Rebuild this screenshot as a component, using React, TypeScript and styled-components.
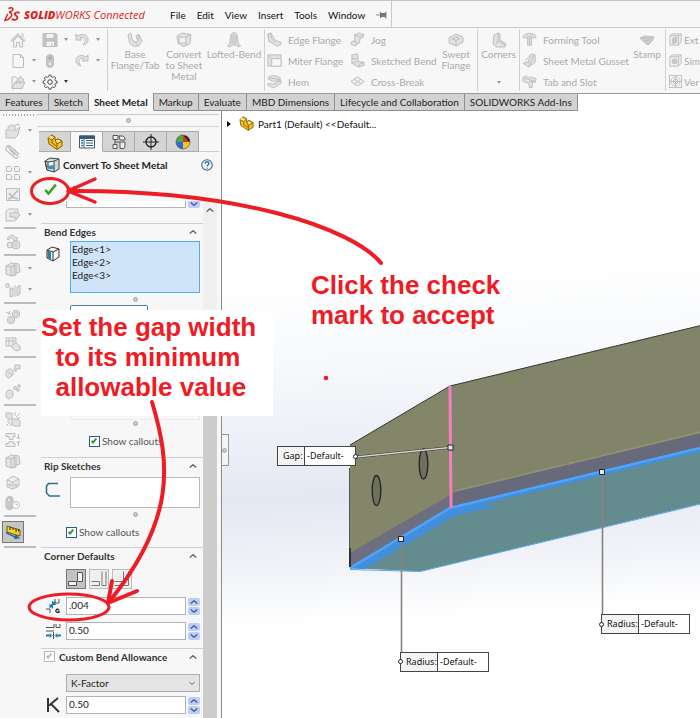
import React from "react";
import styled, { createGlobalStyle, css } from "styled-components";

const RED = "#ee1c24";

const GlobalStyle = createGlobalStyle`
  *, *::before, *::after { box-sizing: border-box; }
  body {
    margin: 0;
    background: #f7f7f7;
    font-family: Lato, "Noto Sans", sans-serif;
    font-size: 10px;
    line-height: 12px;
    color: #222;
  }
  button, input, select { font: inherit; color: inherit; margin: 0; }
  ul { list-style: none; margin: 0; padding: 0; }
`;

/* ---------- icons ---------- */

const g = { fill: "#e2e2e2", stroke: "#bdbdbd", strokeWidth: 1, strokeLinejoin: "round" as const };
const line = { fill: "none", stroke: "#bdbdbd", strokeWidth: 1 };

const glyphs: Record<string, React.ReactNode> = {
  home: <g {...g}><path d="M1 8.5 8 1.5l7 7-1 1-6-6-6 6z" /><path d="M3.5 8.5V15h3v-4.500h3V15h3V8.500L8 4z" fill="#f4f4f4" /><path d="M11.500 2h1.500v3" fill="none" /></g>,
  save: <g {...g}><path d="M1 1.500h13l1 1V14.500H1z" fill="#c4c4c4" /><path d="M4 1.500h8v5H4zM4 9h8.500v5.500H4z" fill="#f3f3f3" /><path d="M10 11v3.500" /></g>,
  undo: <g {...g}><path d="M2 2v6h6L6 6c3-1.500 6 0 5 3.500-.3 1.500-1 2.500-2 3.500 3-.5 5.500-3 5-6C13.500 3 8.500 1 4 4z" /></g>,
  redo: <g {...g}><path d="M14 2v6H8l2-2C7 4.500 4 6 5 9.500c.3 1.500 1 2.500 2 3.500-3-.5-5.500-3-5-6C2.500 3 7.500 1 12 4z" /></g>,
  page: <path {...g} fill="#f8f8f8" d="M3 1.500h7.500L13.500 4.500v10H3zM10.500 1.500v3h3" />,
  traffic: <g {...g}><rect x="4.500" y="1.500" width="7" height="13" rx="3.500" fill="#c9c9c9" /><circle cx="8" cy="5" r="2" fill="#aaa" /><circle cx="8" cy="11" r="2" fill="#eee" /></g>,
  open: <g {...g}><path d="M2 3h4l1 1.500h4v10H2z" fill="#f5f5f5" /><path d="M2 14.500 5 8h10l-3 6.500z" /><path d="M6 10c0-4 2-5.500 4-5.500V2l4 4-4 4V7c-2 0-3 1-4 3z" /></g>,
  gear: <g fill="none" stroke="#444"><circle cx="8" cy="8" r="2.300" /><path d="M7 1.500h2l.5 1.800 1.300.6 1.700-.9 1.500 1.500-.9 1.700.5 1.300 1.900.5v2l-1.900.5-.5 1.200.9 1.700-1.500 1.500-1.700-.9-1.300.6-.5 1.900H7l-.5-1.900-1.300-.6-1.700.9L2 13.400l.9-1.700-.5-1.200-1.900-.5V8l1.900-.5.5-1.300L2 4.500 3.500 3l1.700.9 1.300-.6z" transform="translate(.5 -.3) scale(.94)" /></g>,
  base: <g {...g}><path d="M1 3l3-1.500 1 6c1 3 4 4 5.500 1L9 4l3-1.500 3 7-3.500 4.500c-5 1.500-8-1-9-4z" /><path d="M5 7.500 9 11l2.500 3M12 2.500l-.5 6" fill="none" /></g>,
  convert: <g {...g}><path d="M1 4l5-3 9 1.500-1 9-6 3-6-3z" /><path d="M3 5h7v6H3zM10 5l5-2.500M10 11v3" fill="#f2f2f2" /></g>,
  loft: <g {...g}><path d="M5 3c0-3 6-3 6 0l1.500 9 2 2-2.500 1-2-2H6l-2 2-2.500-1 2-2z" /><path d="M6 3v9M8 2v10M10 3v9" fill="none" /></g>,
  edge: <g {...g}><path d="M1 2l3-1 5 8 6 2v2l-4 2-9-5z" /><path d="M1 2l1 8M4 1l1 6 4 4" fill="none" /></g>,
  miter: <g {...g}><path d="M1 2h14v12H1z" /><path d="M5 6h10v8H5z" fill="#f7f7f7" /><path d="M1 2l4 4" /></g>,
  hem: <g {...g}><path d="M1 4c3-3 8-3 13 0v3L6 8 1 5zM1 10l5 1 9-4v3l-8 5-6-3z" /><path d="M2 4l12 2" fill="none" /></g>,
  jog: <g {...g}><path d="M5 3l5-2 5 2-1 3-3 .5-1 5-5 3.500-4-2 1-3 3-.5z" /><path d="M5 3l5 2 4-1.500M4 9l3 2v3" fill="none" /></g>,
  sketched: <g {...g}><path d="M2 2l6-1 1 8 6 1v3l-6 2-7-4z" /><path d="M2 11l6-2M9 15l1-3 5-2M2 6h6" fill="none" /></g>,
  cross: <g {...g} fill="#eee"><path d="M1 8l7-5 7 5-7 5zM4.500 5.500l7 5M11.500 5.500l-7 5" /></g>,
  swept: <g {...g}><path d="M1 6l7-4 7 3v5l-7 4-7-3zM4 7l4-2 4 1.500-4 2zM8 9v5" /></g>,
  corners: <g {...g}><path d="M3 3l4-2 2 1v6l6 4-1 3H5l-3-3z" /><path d="M7 1v8l-2 3M7 9l7 4" fill="none" /></g>,
  forming: <g {...g}><path d="M1 6c0-6 14-6 14 0-2 1-3 0-5 0v8H6V6C4 6 3 7 1 6z" /><path d="M5 3l3 3 3-3M8 6v8" fill="none" /></g>,
  gusset: <g {...g}><path d="M1 11l5-1 4-9 4 1v8l-7 5z" /><path d="M6 10l3 1 4-9M9 11l-2 4M3 9l6-7" fill="none" /></g>,
  slot: <g {...g}><path d="M1 4l3-2 3 2 2-1 6 2-1 4-3-1v6l-3 1-1-5-6-2z" /><path d="M1 4l13 4M8 9l3-1" fill="none" /></g>,
  stamp: <g {...g} fill="#cfcfcf"><path d="M1 6l5-2 9 1-2 4-4 4-4-3z" /><path d="M4 6l5 1 4-1M6 9l5-1" fill="none" /></g>,
  cut: <g {...g} fill="#eee"><path d="M2 4l3-2h9v9l-3 3H2zM2 4h9v10M11 4l3-2" /><path d="M5 7l2-1h2v5l-2 1H5z" fill="#ccc" /></g>,
  hole: <g {...g} fill="#eee"><path d="M2 4l3-2h9v9l-3 3H2zM2 4h9v10M11 4l3-2" /><circle cx="7" cy="9" r="2.500" fill="#ccc" /></g>,
  vent: <g {...line}><rect x="1.500" y="1.500" width="13" height="13" /><circle cx="8" cy="8" r="5" /><circle cx="8" cy="8" r="2.500" /><path d="M8 2v12M2 8h12" /></g>,
  folderBox: <g {...g}><path d="M1 7h10l4-3-2 8-3 3H1z" /><path d="M3 7V4l3-2 4 1v4M10 2l3-1 2 2" /></g>,
  clip: <path {...line} strokeWidth="1.300" d="M3 3l9 8c2 2 0 4-2 3L2 7C-1 4 3 0 6 3l8 7M5 6l5 5" />,
  grid: <g {...g} fill="#f2f2f2"><path d="M1.500 1.500h4l1 1v4h-5zM9.500 1.500h4l1 1v4h-5zM1.500 9.500h4l1 1v4h-5zM9.500 9.500h4l1 1v4h-5z" /></g>,
  arrowBox: <g {...g}><path d="M1.500 2.500h13v12h-13z" fill="#eee" /><path d="M4 7l3 4 6-7M3 13l5-2 5 2" fill="none" strokeWidth="1.600" /></g>,
  export: <g {...g}><path d="M1 4l3-2h9v9l-3 3H1z" fill="#eee" /><path d="M5 6h5V4l5 4-5 4v-2H5z" /></g>,
  gears: <g {...g}><path d="M2 5c2-5 8-4 9-1l1-1v4H8l1-1C7 3 4 4 4 6z" /><circle cx="5" cy="11" r="3" /><circle cx="11" cy="11" r="4" /><circle cx="11" cy="11" r="1.300" fill="#fff" /></g>,
  cubes: <g {...g}><path d="M1 5l5-3 8 1 1 8-4 1v2l-5 1-5-2zM1 5l5 1v8M6 6l5-2v9M9 2v12" /></g>,
  mirror: <g {...g}><circle cx="2.500" cy="3.500" r="2" /><path d="M5 6h3v8l-3 1zM10 3v12M12 5l3-2v9l-3 2z" /></g>,
  ring: <g {...g}><circle cx="11" cy="5" r="3.700" /><circle cx="11" cy="5" r="1.500" fill="#fff" /><circle cx="6" cy="11" r="3.700" /><circle cx="6" cy="11" r="1.500" fill="#fff" /><path d="M1 3l5 2M3 6l2-4" /></g>,
  table: <g {...g}><path d="M1 2h10v8H1zM1 5h10M4 2v8M8 2v8" fill="#f1f1f1" /><path d="M7 9l4-2 4 3v4l-4 1-4-3z" /></g>,
  blob: <g {...g}><path d="M1 9c2-5 6-3 7-1v4l-4 3c-4-1-3-4-3-6zM10 2h5v4h-4v3l-2-2z" /><path d="M3 9l4 3" fill="none" /></g>,
  blob2: <g {...g}><path d="M1 9c2-5 6-3 7-1v4l-4 3c-4-1-3-4-3-6z" /><circle cx="10" cy="4" r="1.500" /><circle cx="14" cy="2" r="1.300" /><circle cx="13" cy="6" r="1.300" /></g>,
  burst: <g {...g}><path d="M1 2h6v6H3L1 6zM7 8h6l2 2v5H9l-2-2z" /><path d="M10 5V1M11 6l4-4M12 7h3M5 11l-4 4M5 10H2M6 12v3" /></g>,
  press: <g {...g} fill="#eee"><path d="M1 1.500h9v3H8v3H4v-3H1zM1 14.500h9v-3H8v-2H4v2H1zM13.500 2v5M12 5l1.500 2L15 5M13.500 14V9M12 11l1.500-2 1.500 2" /></g>,
  house: <g {...g} fill="#ececec"><path d="M2 6l6-4 6 3v7l-6 3-6-2zM2 6l6 2 6-3M8 8v7M4 10h2v2H4zM10 10h2v2h-2z" /></g>,
  clock: <g {...g}><path d="M1 4c2-4 7-3 7 0v9c-2 3-6 2-7-1z" fill="#c9c9c9" /><circle cx="4" cy="5" r="1.500" fill="#fff" /><circle cx="11" cy="10" r="3.500" fill="#fff" /><path d="M11 8v2h2" /></g>,
  measure: <g><path d="M2 2l13 4v6L2 8z" fill="#ffcf2a" stroke="#6b5a10" /><path d="M5 3v3M8 4v2M11 5v3M13.500 5.500v2" stroke="#222" /><path d="M1 8l9 4 .5-2 4.500 4.500-6 .5.500-1.500-8.500-4z" fill="#1d6a9c" /></g>,
  part: <g stroke="#8a6508" strokeLinejoin="round"><path d="M1 4l3-3 4 2v3l3-1 4 2v5l-5 3.500L2 10z" fill="#f5bd1f" /><path d="M4 1l4 2-3 3-4-2M8 6l3-1 4 2-5 3z" fill="#ffe071" /><path d="M5 6v3l5 3.500M10 10v5" fill="none" /></g>,
  properties: <g stroke="#3c5a72" fill="#fff"><path d="M.5 2h15v12H.500z" /><path d="M.5 2h15v2.500H.500z" fill="#2c5a80" /><path d="M5 4.500V14" /><path d="M2 6.500h2M2 9h2M2 11.500h2" stroke="#2080c0" strokeWidth="1.500" /><path d="M7 6.500h7M7 9h7M7 11.500h7" /></g>,
  config: <g stroke="#555" fill="#eee"><path d="M2 1.500h5v4H2zM2 10.500h4v4H2zM4 5.500v5M4 8h5" /><path d="M8 2h4l2 2v2H9zM9 8h5v4l-1 2.500H9z" /></g>,
  target: <g stroke="#222" fill="none" strokeWidth="1.400"><circle cx="8" cy="8" r="5" /><path d="M8 0v16M0 8h16" strokeWidth="1" /></g>,
  ball: <g><path d="M8 8l-7 0a7 7 0 0 0 7 7z" fill="#2f67e0" /><path d="M8 8v7a7 7 0 0 0 7-7z" fill="#f4c520" /><path d="M8 8h7a7 7 0 0 0-7-7z" fill="#dd3422" /><path d="M1 8a7 7 0 0 1 7-7v7z" fill="#48ad3c" /><path d="M9 2l5 6 1-2-3-4z" fill="#222" /><circle cx="8" cy="8" r="7" fill="none" stroke="#555" strokeWidth=".7" /></g>,
  sheet: <g stroke="#39444d" strokeLinejoin="round"><path d="M1 4l5-3 9 1v10l-5 3-7-2z" fill="#cfd5d8" /><path d="M1 4l3 1 6-1 5-2M4 5v6l6-1V4" fill="#eef2f4" /><path d="M10 10v5M1 4l2 9" fill="none" /><path d="M3 9l7-1v4H5z" fill="#3f8eb8" stroke="none" /></g>,
  help: <g fill="none" stroke="#45677f"><circle cx="8" cy="8" r="7" strokeWidth="1.500" /><path d="M5.500 6.200c0-3.300 5-3.300 5 0C10.500 8 8 8 8 10M8 11.500v1.500" stroke="#1f72a8" strokeWidth="1.800" /></g>,
  check: <path d="M1.500 8.500l4 4.500 9-11" fill="none" stroke="#38a01e" strokeWidth="3" />,
  cancel: <path d="M3 3l10 10M13 3L3 13" fill="none" stroke="#e2571c" strokeWidth="3" />,
  body: <g stroke="#333" strokeLinejoin="round"><path d="M2 4l5-3 7 2v8l-6 4-6-3z" fill="#f4f4f4" /><path d="M2 4l6 2 6-3M8 6v9" fill="none" /><path d="M2.500 4.500L6 6v7.500L2.500 12z" fill="#2e7fa8" stroke="none" /></g>,
  rip: <path d="M13 1.500H3.500L1.500 4v7l3 3H15" fill="none" stroke="#2f6f94" strokeWidth="1.600" />,
  gapSize: <g fill="none"><path d="M1 11h4v4M10 1v4h4V1" stroke="#555" /><path d="M10.500 3.500 4.500 9.500" stroke="#1d7ab0" strokeWidth="1.600" /><path d="M7 2.500v4.500h4.500zM3.500 6.500H8V11z" fill="#1d7ab0" /><path d="M14 11.500c-3-2-4.500 3-1.500 3h1.500V13h-1.500" stroke="#222" strokeWidth="1.200" /></g>,
  ratio: <g fill="none" stroke="#555"><path d="M1 4.500h8V1M1 8h8M11 1v3.500h4V1" /><path d="M8.500 9v7" /><path d="M1 12.500h5M16 12.500h-5" stroke="#1d7ab0" strokeWidth="2" /><path d="M5 10.500l2 2-2 2M12 10.500l-2 2 2 2" stroke="#1d7ab0" /></g>,
  factor: <path d="M3 1v14M13 1L4 8.500M6 7l8 8" fill="none" stroke="#333" strokeWidth="2" />,
  cornerOpen: <g fill="#f4f4f4" stroke="#555"><path d="M9.500 1.500h5v9h-5zM.5 10.500h8v4h-8z" /></g>,
  cornerOverlap: <g fill="none" stroke="#777"><path d="M.5 10.500h8M.5 14.500h8v-4M11 .5v14h4V.500" /></g>,
  cornerUnder: <g fill="none" stroke="#777"><path d="M.5 10.500h9V.500M.5 14.500h14V.500" /></g>,
  pin: <g fill="#777" stroke="#777"><path d="M0 8h6" /><path d="M6 4v8M7 6h5v4H7zM13 3.500v9" strokeWidth="1.600" /></g>,
  ds: <g fill="none" stroke="#d9271c" strokeWidth="1.500" strokeLinecap="round"><path d="M5 1.200c3-1 5 .3 3.300 2.300C7.400 4.600 6 5 5 5.300c3 .3 3.500 2.700 1.500 5C5 12.300 3 13.300.8 13.500L3.400 7.500" /><path d="M15 5.500c-3-.7-4.800.6-3.800 2.300.8 1.300 3 1.800 2 3.600-.8 1.500-3 1.600-4.700.9" strokeWidth="1.800" /></g>,
};

const Svg = styled.svg<{ $s: number }>`
  display: block;
  flex: none;
  width: ${(p) => p.$s}px;
  height: ${(p) => p.$s}px;
`;
const Glyph = ({ name, size = 16 }: { name: string; size?: number }) => (
  <Svg $s={size} viewBox="0 0 16 16" aria-hidden="true">{glyphs[name]}</Svg>
);

const Caret = styled.span<{ $dark?: boolean }>`
  width: 0;
  height: 0;
  border: 2px solid transparent;
  border-top: 3px solid ${(p) => (p.$dark ? "#333" : "#999")};
  border-bottom: 0;
`;

/* ---------- shell ---------- */

const Shell = styled.div`
  position: relative;
  display: flex;
  flex-direction: column;
  min-height: 100vh;
  overflow: hidden;
`;

const TitleBar = styled.header`
  display: flex;
  height: 28px;
  border-top: 1px solid #c3c3c3;
  border-bottom: 1px solid #c9c9c9;
`;
const TitleMain = styled.div`
  display: flex;
  align-items: center;
  width: 392px;
  padding: 2px 4px 0;
  border-right: 1px solid #c9c9c9;
`;
const Brand = styled.div`
  display: flex;
  align-items: center;
  flex: none;
  width: 159px;
  gap: 4px;
  color: #d9271c;
  font: italic 11px/14px "Open Sans", sans-serif;
  white-space: pre;
  b { font-weight: 800; }
`;
const Menu = styled.nav`
  display: flex;
  align-items: center;
  gap: 11px;
  margin-left: 7px;
`;
const plainButton = css`
  background: none;
  border: 0;
  padding: 0;
`;
const MenuButton = styled.button`
  ${plainButton}
  color: #111;
`;

const Ribbon = styled.div`
  display: flex;
  height: 65px;
  padding-top: 1px;
  overflow: hidden;
  color: #aaa;
`;
const Group = styled.div<{ $w: number }>`
  display: flex;
  flex: none;
  width: ${(p) => p.$w}px;
  height: 62px;
  border-right: 1px solid #cfcfcf;
`;
const Quick = styled.div`
  display: grid;
  grid-template-columns: 32px 32px 32px;
  grid-template-rows: repeat(3, 21px);
  padding-left: 10px;
`;
const QuickButton = styled.button`
  ${plainButton}
  display: flex;
  align-items: center;
  gap: 6px;
`;
const Big = styled.button<{ $w: number }>`
  ${plainButton}
  display: flex;
  flex-direction: column;
  align-items: center;
  flex: none;
  width: ${(p) => p.$w}px;
  padding-top: 3px;
  line-height: 11px;
  white-space: pre;
  text-align: center;
  svg { margin-bottom: 1px; }
`;
const BigCaret = styled(Caret)`
  margin-top: 21px;
`;
const Stack = styled.div<{ $w: number }>`
  display: grid;
  grid-template-rows: repeat(3, 21px);
  flex: none;
  width: ${(p) => p.$w}px;
  padding-left: 2px;
`;
const Small = styled.button`
  ${plainButton}
  display: flex;
  align-items: center;
  gap: 6px;
  white-space: nowrap;
`;
const Features = styled(Stack)`
  ${Small} { gap: 1px; }
`;

const TabBar = styled.div`
  display: flex;
  height: 18px;
  background: #fff;
  border-top: 1px solid #999;
`;
const Tab = styled.button<{ $on?: boolean }>`
  flex: none;
  padding: 0 5px;
  line-height: 16px;
  white-space: nowrap;
  color: #222;
  background: #d2d2d2;
  border: 0;
  border-right: 1px solid #8f8f8f;
  border-bottom: 1px solid #8f8f8f;
  ${(p) => p.$on && css`
    font-weight: 700;
    background: #f7f7f7;
    border-bottom-color: #f7f7f7;
    margin-top: -1px;
  `}
`;

const Main = styled.main`
  display: flex;
  flex: 1;
`;

/* ---------- left toolbar ---------- */

const Rail = styled.aside`
  flex: none;
  width: 37px;
  padding-top: 9px;
  background:
    repeating-linear-gradient(90deg, #aaa 0 1px, transparent 1px 3px) 3px 3px / 33px 2px no-repeat,
    #f7f7f7;
`;
const RailRow = styled.div<{ $on?: boolean }>`
  display: flex;
  align-items: center;
  justify-content: space-between;
  height: ${(p) => (p.$on ? 25 : 21)}px;
  padding: 0 5px;
  padding-left: ${(p) => (p.$on ? 2 : 5)}px;
`;
const RailButton = styled.button<{ $on?: boolean }>`
  ${plainButton}
  ${(p) => p.$on && css`
    padding: 2px;
    background: #c6c6c6;
    border: 1px solid #777;
  `}
`;
const RailRule = styled.hr`
  height: 2px;
  margin: 2px 1px 2px 4px;
  border: 0;
  background: #bbb;
`;

/* ---------- property panel ---------- */

const Panel = styled.section`
  display: flex;
  flex-direction: column;
  flex: none;
  width: 185px;
  background: #f7f7f7;
  border-right: 1px solid #8b8b8b;
`;
const PanelGrip = styled.div`
  display: flex;
  align-items: center;
  justify-content: center;
  height: 13px;
  margin: 3px 2px 0 0;
  border-top: 1px solid #cacaca;
  border-bottom: 1px solid #d5d5d5;
`;
const Dot = styled.span`
  width: 5px;
  height: 5px;
  border-radius: 50%;
  background: #ccc;
  border: 1px solid #a5a5a5;
`;
const DotRow = styled.div<{ $h: number }>`
  display: flex;
  align-items: center;
  justify-content: center;
  height: ${(p) => p.$h}px;
  margin-left: 29px;
`;
const PanelTabs = styled.div`
  display: flex;
  height: 21px;
  margin: 4px 2px 0 2px;
`;
const PanelTab = styled.button<{ $on?: boolean }>`
  display: flex;
  align-items: center;
  justify-content: center;
  flex: none;
  width: 32px;
  padding: 0;
  background: ${(p) => (p.$on ? "#f7f7f7" : "#d4d4d4")};
  border: 1px solid #aaa;
  border-left: 0;
  border-bottom-color: ${(p) => (p.$on ? "#f7f7f7" : "#aaa")};
`;
const TabFill = styled.div`
  flex: 1;
  border-bottom: 1px solid #ccc;
`;
const PanelTitle = styled.h1`
  display: flex;
  align-items: center;
  gap: 3px;
  height: 26px;
  margin: 0;
  padding: 0 8px 0 7px;
  font-size: 10px;
  font-weight: 700;
  span { flex: 1; white-space: nowrap; }
`;
const Actions = styled.div`
  display: flex;
  align-items: center;
  gap: 8px;
  height: 23px;
  padding-left: 7px;
`;
const IconButton = styled.button`
  ${plainButton}
`;
const Scroller = styled.div`
  display: flex;
  flex: 1;
  padding-right: 4px;
`;
const Fields = styled.div`
  flex: 1;
  min-width: 0;
  padding-left: 4px;
`;
const ScrollTrack = styled.div`
  display: flex;
  flex-direction: column;
  align-items: center;
  width: 14px;
  background: #f0f0f0;
`;
const ScrollThumb = styled.div`
  flex: 1;
  width: 14px;
  margin-top: 180px;
  background: #cdcdcd;
`;
const Clipped = styled.div`
  display: flex;
  align-items: flex-end;
  height: 7px;
  margin-bottom: 15px;
  padding-right: 3px;
  overflow: hidden;
`;
const Section = styled.section<{ $b: number }>`
  padding: 0 3px ${(p) => p.$b}px 0;
  border-top: 1px solid #cfcfcf;
`;
const SectionHead = styled.h2<{ $gap: number }>`
  display: flex;
  align-items: center;
  gap: 4px;
  height: 15px;
  margin: 0 0 ${(p) => p.$gap}px;
  padding: 0 3px;
  font-size: 10px;
  font-weight: 700;
  color: #333;
  span, label { flex: 1; white-space: nowrap; }
`;
const Field = styled.div<{ $gap?: number }>`
  display: flex;
  align-items: center;
  margin-top: ${(p) => p.$gap ?? 0}px;
`;
const FieldIcon = styled.span<{ $wide?: boolean; $top?: boolean }>`
  display: flex;
  flex: none;
  width: ${(p) => (p.$wide ? 29 : 25)}px;
  padding-left: 4px;
  ${(p) => p.$top && "align-self: flex-start; padding-top: 5px;"}
`;
const ListBox = styled.ul<{ $h: number; $on?: boolean }>`
  flex: 1;
  height: ${(p) => p.$h}px;
  padding: 1px 1px;
  line-height: 13px;
  color: #222;
  background: ${(p) => (p.$on ? "#cfe4f8" : "#fff")};
  border: 1px solid ${(p) => (p.$on ? "#54aee6" : "#b5b9c0")};
`;
const EmptyList = styled(ListBox)`
  background: none;
  border-color: #ececec;
`;
const Outline = styled.button`
  display: block;
  width: 78px;
  height: 16px;
  margin-left: 29px;
  margin-bottom: 39px;
  background: #fff;
  border: 1px solid #4a7fa5;
  border-radius: 2px;
`;
const CheckRow = styled.label<{ $top: number; $left: number }>`
  display: flex;
  align-items: center;
  gap: 2px;
  height: 12px;
  margin: ${(p) => p.$top}px 0 0 ${(p) => p.$left}px;
  color: #555;
`;
const Tick = styled.input<{ $muted?: boolean }>`
  appearance: none;
  flex: none;
  width: 11px;
  height: 11px;
  border: 1px solid ${(p) => (p.$muted ? "#bbb" : "#2c5c8c")};
  background: #fff;
  &:checked::before {
    content: "";
    display: block;
    width: 6px;
    height: 3px;
    margin: 2px 0 0 1px;
    border: solid ${(p) => (p.$muted ? "#b9b9b9" : "#2f9b2f")};
    border-width: 0 0 2px 2px;
    transform: rotate(-48deg);
  }
`;
const Corners = styled.div`
  display: flex;
  gap: 3px;
  margin-left: 25px;
`;
const CornerButton = styled.button<{ $on?: boolean }>`
  display: grid;
  place-items: center;
  width: 20px;
  height: 20px;
  padding: 0;
  background: ${(p) => (p.$on ? "#c2c2c2" : "#f0f0f0")};
  border: 1px solid ${(p) => (p.$on ? "#777" : "#bbb")};
`;
const TextBox = styled.input`
  flex: 1;
  min-width: 0;
  height: 18px;
  padding: 0 2px 2px;
  background: #fff;
  border: 1px solid #b3b3b3;
  border-radius: 0;
`;
const Spin = styled.span`
  display: flex;
  flex-direction: column;
  gap: 1px;
  width: 12px;
  margin-left: 2px;
`;
const SpinButton = styled.button`
  display: grid;
  place-items: center;
  width: 12px;
  height: 8px;
  padding: 0;
  background: #bccdfb;
  border: 0;
  border-radius: 2px;
`;
const Combo = styled.span`
  display: grid;
  flex: 1;
  align-items: center;
  margin-left: 25px;
  > * { grid-area: 1 / 1; }
  > svg { justify-self: end; margin-right: 5px; pointer-events: none; }
`;
const Select = styled.select`
  appearance: none;
  height: 18px;
  padding: 0 4px;
  background: #e4e4e4;
  border: 1px solid #adadad;
  border-radius: 0;
`;

const Chevron = ({ up, w = 8, color = "#666" }: { up?: boolean; w?: number; color?: string }) => (
  <svg width={w} height={w / 2} viewBox="0 0 8 4" aria-hidden="true">
    <path d={up ? "M.7 3.600 4 .7l3.300 2.900" : "M.7.4 4 3.300 7.300.4"} fill="none" stroke={color} strokeWidth="1.300" />
  </svg>
);

const Spinner = ({ label }: { label: string }) => (
  <Spin>
    <SpinButton aria-label={`Increase ${label}`}><Chevron up color="#4a5f8c" /></SpinButton>
    <SpinButton aria-label={`Decrease ${label}`}><Chevron color="#4a5f8c" /></SpinButton>
  </Spin>
);

const NumberField = ({ icon, label, value, gap }: { icon: string; label: string; value: string; gap: number }) => (
  <Field $gap={gap}>
    <FieldIcon><Glyph name={icon} size={16} /></FieldIcon>
    <TextBox aria-label={label} defaultValue={value} />
    <Spinner label={label} />
  </Field>
);

/* ---------- viewport ---------- */

const Viewport = styled.section`
  position: relative;
  flex: 1;
  min-width: 0;
  overflow: hidden;
  background: linear-gradient(177deg, #fff 0, #fff 27%, #f6f8fb 42%, #e4e8f2 62%, #f1f3f8 73%, #fff 82%);
`;
const Tree = styled.div`
  display: flex;
  align-items: center;
  height: 25px;
  padding-left: 5px;
  color: #111;
  svg { margin: 0 4px 0 8px; }
`;
const TreeArrow = styled.span`
  border: 3px solid transparent;
  border-left: 4px solid #111;
  border-right: 0;
`;
const Drawing = styled.svg`
  position: absolute;
  left: 0;
  top: 0;
  width: 100%;
  height: 100%;
`;
const PanelHandle = styled.button`
  position: absolute;
  left: -1px;
  top: 323px;
  display: grid;
  place-items: center;
  width: 8px;
  height: 32px;
  padding: 0;
  background: #f5f5f5;
  border: 1px solid #999;
  border-left: 0;
`;
const Callout = styled.div<{ $x: number; $y: number; $label: number }>`
  position: absolute;
  left: ${(p) => p.$x}px;
  top: ${(p) => p.$y}px;
  display: grid;
  grid-template-columns: ${(p) => p.$label}px 50px;
  height: 20px;
  font: 9px/18px "Noto Sans", "Open Sans", sans-serif;
  color: #111;
  background: #fff;
  border: 1px solid #444;
  span:first-child { padding-left: 5px; background: #f4f4f4; border-right: 1px solid #444; }
  span:last-child { padding-left: 2px; }
`;
const Anchor = styled.i<{ $x: number; $y: number }>`
  position: absolute;
  left: ${(p) => p.$x}px;
  top: ${(p) => p.$y}px;
  width: 5px;
  height: 5px;
  border: 1px solid #222;
  border-radius: 50%;
  background: #fff;
`;

const Model = () => (
  <Drawing aria-label="Sheet metal part">
    <g transform="translate(-222 -111)">
      <path d="M350 568 450 508 1200 328V383L420 571.500Z" fill="#648b8d" />
      <path d="M350 445 450 386V498L350 556Z" fill="#84866a" />
      <path d="M450 386 1200 205V315L454 493 450 497Z" fill="#818469" />
      <path d="M350 553 450 495V509L350 569Z" fill="#6d6f80" />
      <path d="M450 495 455 492 1200 313V329L450 509Z" fill="#676a7a" />
      <path d="M455 491 1200 312" stroke="#8f9274" strokeWidth="1.500" />
      <path d="M350 568.500 450 507 458 514 365 569Z" fill="#448fdc" />
      <path d="M450 507 1200 327V331L484 504 497 507 456 515Z" fill="#448fdc" />
      <path d="M350 568 450 508 1200 328" fill="none" stroke="#4da4fb" strokeWidth="2.500" />
      <path d="M350 569.500 420 571.500 1200 384" fill="none" stroke="#5aa6ec" />
      <path d="M350 445 450 386 1200 205" fill="none" stroke="#34362a" />
      <path d="M349.500 468V567" stroke="#555" />
      <path d="M350 548V567" stroke="#222" strokeWidth="1.500" />
      <path d="M452.500 388V492" stroke="#7c7f85" strokeWidth="2" strokeDasharray="14 3" />
      <path d="M450 386 451 508" stroke="#f77fbb" strokeWidth="3" />
      <g fill="#6f705a" stroke="#222" strokeWidth="1.300">
        <ellipse cx="376.500" cy="490.500" rx="4.300" ry="15" />
        <ellipse cx="423.500" cy="464" rx="4.300" ry="15" />
      </g>
      <path d="M356 457 450 447.500" stroke="#333" strokeWidth="2.500" />
      <path d="M356 457 450 447.500" stroke="#d8d8cc" strokeWidth="1.300" />
      <path d="M401.500 540V652M602.500 473V614" stroke="#85857e" strokeWidth="1.600" />
      <g fill="#e8e8e0" stroke="#222">
        <path d="M448 445h5v5h-5z" /><path d="M398.500 536.500h5v5h-5z" /><path d="M599.500 469.500h5v5h-5z" />
      </g>
    </g>
  </Drawing>
);

/* ---------- tutorial mark-up ---------- */

const Marks = styled.svg`
  position: absolute;
  left: 0;
  top: 0;
  width: 100%;
  height: 100%;
  pointer-events: none;
`;
const Note = styled.p<{ $x: number; $y: number; $boxed?: boolean }>`
  position: absolute;
  left: ${(p) => p.$x}px;
  top: ${(p) => p.$y}px;
  margin: 0;
  font: 700 26px/30px "Liberation Sans", Arial, sans-serif;
  white-space: pre;
  color: ${RED};
  ${(p) => p.$boxed && css`
    width: 232px;
    height: 106px;
    padding-top: 2px;
    background: #fff;
  `}
`;

const quick: [string, string, boolean][] = [
  ["Home", "home", false], ["Save", "save", true], ["Undo", "undo", true],
  ["New", "page", true], ["Rebuild", "traffic", false], ["Redo", "redo", true],
  ["Open", "open", true], ["Options", "gear", true],
];

const rail: (string | null)[] = [
  "folderBox+", "clip", "grid+", "arrowBox", "export+", null, "gears", null, "cubes+", "mirror+", null,
  "ring", null, "table", null, "blob", "blob2", null, "burst", "press", "cubes", "house", "clock", null, "measure", null,
];

const Tools = ({ w, items, as: Box = Stack }: { w: number; items: [string, string][]; as?: typeof Stack }) => (
  <Box $w={w}>
    {items.map(([icon, text]) => (
      <Small key={text}><Glyph name={icon} size={15} />{text}</Small>
    ))}
  </Box>
);

export default function App() {
  return (
    <Shell>
      <GlobalStyle />
      <TitleBar>
        <TitleMain>
          <Brand>
            <Glyph name="ds" size={16} />
            <span><b>SOLID</b>WORKS Connected</span>
          </Brand>
          <Menu>
            {["File", "Edit", "View", "Insert", "Tools", "Window"].map((m) => <MenuButton key={m}>{m}</MenuButton>)}
            <IconButton aria-label="Pin menu"><Glyph name="pin" size={12} /></IconButton>
          </Menu>
        </TitleMain>
      </TitleBar>

      <Ribbon>
        <Group $w={108}>
          <Quick>
            {quick.map(([label, icon, menu]) => (
              <QuickButton key={label} aria-label={label}>
                <Glyph name={icon} />
                {menu && <Caret $dark={icon === "gear"} />}
              </QuickButton>
            ))}
          </Quick>
        </Group>
        <Group $w={157}>
          <Big $w={54}><Glyph name="base" />{"Base\nFlange/Tab"}</Big>
          <Big $w={44}><Glyph name="convert" />{"Convert\nto Sheet\nMetal"}</Big>
          <Big $w={56}><Glyph name="loft" />Lofted-Bend</Big>
        </Group>
        <Group $w={213}>
          <Tools w={83} items={[["edge", "Edge Flange"], ["miter", "Miter Flange"], ["hem", "Hem"]]} />
          <Tools w={88} items={[["jog", "Jog"], ["sketched", "Sketched Bend"], ["cross", "Cross-Break"]]} />
          <Big $w={40}><Glyph name="swept" />{"Swept\nFlange"}</Big>
        </Group>
        <Group $w={42}>
          <Big $w={41}><Glyph name="corners" />Corners<BigCaret /></Big>
        </Group>
        <Group $w={146}>
          <Tools w={109} items={[["forming", "Forming Tool"], ["gusset", "Sheet Metal Gusset"], ["slot", "Tab and Slot"]]} />
          <Big $w={36}><Glyph name="stamp" />Stamp</Big>
        </Group>
        <Tools as={Features} w={34} items={[["cut", "Ext"], ["hole", "Sim"], ["vent", "Ver"]]} />
      </Ribbon>

      <TabBar>
        <Tab>Features</Tab>
        <Tab>Sketch</Tab>
        <Tab $on>Sheet Metal</Tab>
        <Tab>Markup</Tab>
        <Tab>Evaluate</Tab>
        <Tab>MBD Dimensions</Tab>
        <Tab>Lifecycle and Collaboration</Tab>
        <Tab>SOLIDWORKS Add-Ins</Tab>
      </TabBar>

      <Main>
        <Rail>
          {rail.map((r, i) => {
            if (r === null) return <RailRule key={i} />;
            const icon = r.replace("+", "");
            const on = icon === "measure";
            return (
              <RailRow key={i} $on={on}>
                <RailButton $on={on} aria-label={icon}><Glyph name={icon} /></RailButton>
                {r.endsWith("+") && <Caret />}
              </RailRow>
            );
          })}
        </Rail>

        <Panel>
          <PanelGrip><Dot /></PanelGrip>
          <PanelTabs>
            {["part", "properties", "config", "target", "ball"].map((t) => (
              <PanelTab key={t} $on={t === "properties"} aria-label={t}><Glyph name={t} /></PanelTab>
            ))}
            <TabFill />
          </PanelTabs>
          <PanelTitle>
            <Glyph name="sheet" />
            <span>Convert To Sheet Metal</span>
            <Glyph name="help" size={12} />
          </PanelTitle>
          <Actions>
            <IconButton aria-label="OK"><Glyph name="check" size={13} /></IconButton>
            <IconButton aria-label="Cancel"><Glyph name="cancel" size={12} /></IconButton>
          </Actions>
          <Scroller>
            <Fields>
              <Clipped>
                <FieldIcon />
                <TextBox aria-label="Thickness" />
                <Spinner label="thickness" />
              </Clipped>

              <Section $b={10}>
                <SectionHead $gap={2}><span>Bend Edges</span><Chevron up /></SectionHead>
                <Field>
                  <FieldIcon $wide $top><Glyph name="body" /></FieldIcon>
                  <ListBox $h={52} $on>
                    <li>Edge&lt;1&gt;</li>
                    <li>Edge&lt;2&gt;</li>
                    <li>Edge&lt;3&gt;</li>
                  </ListBox>
                </Field>
                <DotRow $h={12}><Dot /></DotRow>
                <Outline aria-label="Collect bends" />
                <Field><FieldIcon $wide /><EmptyList $h={60} /></Field>
                <DotRow $h={6}><Dot /></DotRow>
                <CheckRow $top={9} $left={48}><Tick type="checkbox" defaultChecked />Show callouts</CheckRow>
              </Section>

              <Section $b={9}>
                <SectionHead $gap={4}><span>Rip Sketches</span><Chevron up /></SectionHead>
                <Field>
                  <FieldIcon $wide $top><Glyph name="rip" /></FieldIcon>
                  <ListBox $h={31} />
                </Field>
                <DotRow $h={12}><Dot /></DotRow>
                <CheckRow $top={6} $left={25}><Tick type="checkbox" defaultChecked />Show callouts</CheckRow>
              </Section>

              <Section $b={8}>
                <SectionHead $gap={6}><span>Corner Defaults</span><Chevron up /></SectionHead>
                <Corners>
                  <CornerButton $on aria-label="Open butt"><Glyph name="cornerOpen" /></CornerButton>
                  <CornerButton aria-label="Overlap"><Glyph name="cornerOverlap" /></CornerButton>
                  <CornerButton aria-label="Underlap"><Glyph name="cornerUnder" /></CornerButton>
                </Corners>
                <NumberField icon="gapSize" label="gap" value=".004" gap={8} />
                <NumberField icon="ratio" label="overlap ratio" value="0.50" gap={7} />
              </Section>

              <Section $b={3}>
                <SectionHead $gap={10}>
                  <Tick id="allowance" type="checkbox" defaultChecked $muted />
                  <label htmlFor="allowance">Custom Bend Allowance</label>
                  <Chevron up />
                </SectionHead>
                <Field>
                  <Combo>
                    <Select aria-label="Allowance type"><option>K-Factor</option></Select>
                    <Chevron w={6} />
                  </Combo>
                </Field>
                <NumberField icon="factor" label="K-factor" value="0.50" gap={4} />
              </Section>
            </Fields>
            <ScrollTrack>
              <Field $gap={7}><Chevron up /></Field>
              <ScrollThumb />
            </ScrollTrack>
          </Scroller>
        </Panel>

        <Viewport>
          <Model />
          <Tree>
            <TreeArrow />
            <Glyph name="part" size={15} />
            Part1 (Default) &lt;&lt;Default...
          </Tree>
          <PanelHandle aria-label="Collapse panel"><Dot /></PanelHandle>
          <Callout $x={55} $y={335} $label={27}><span>Gap:</span><span>-Default-</span></Callout>
          <Callout $x={178} $y={541} $label={37}><span>Radius:</span><span>-Default-</span></Callout>
          <Callout $x={379} $y={503} $label={37}><span>Radius:</span><span>-Default-</span></Callout>
          <Anchor $x={131} $y={343} />
          <Anchor $x={176} $y={548} />
          <Anchor $x={377} $y={511} />
        </Viewport>
      </Main>

      <Note $x={41} $y={310} $boxed>{"Set the gap width\n  to its minimum\n  allowable value"}</Note>
      <Note $x={311} $y={270}>{"Click the check\nmark to accept"}</Note>
      <Marks aria-hidden="true">
        <g fill="none" stroke={RED} strokeWidth="4" strokeLinecap="round" strokeLinejoin="round">
          <ellipse cx="50" cy="191" rx="18.500" ry="12.500" strokeWidth="3" />
          <path d="M381 263C352 228 240 190 69 191" />
          <path d="M95 179 68 191 95 202" strokeWidth="3.500" />
          <ellipse cx="69" cy="607" rx="40" ry="13" strokeWidth="3" />
          <path d="M152 402C171 465 175 520 109 602" />
          <path d="M112 581 108 603 137 591" />
        </g>
        <circle cx="326" cy="378" r="2.300" fill={RED} />
      </Marks>
    </Shell>
  );
}
